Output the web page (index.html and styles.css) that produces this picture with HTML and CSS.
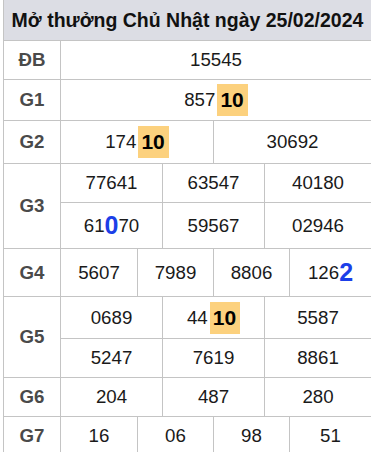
FILE: index.html
```html
<!DOCTYPE html>
<html lang="vi">
<head>
    <meta charset="UTF-8">
    <meta name="viewport" content="width=device-width, initial-scale=1.0">
    <title>Kết quả xổ số</title>
    <link rel="stylesheet" href="styles.css">
</head>
<body>
    <div class="kq">
        <div class="kq-title">Mở thưởng Chủ Nhật ngày 25/02/2024</div>

        <div class="kq-row row-db">
            <div class="kq-label">ĐB</div>
            <div class="kq-vals">
                <div class="cell">15545</div>
            </div>
        </div>

        <div class="kq-row row-g1">
            <div class="kq-label">G1</div>
            <div class="kq-vals">
                <div class="cell">857<span class="hl">10</span></div>
            </div>
        </div>

        <div class="kq-row row-g2">
            <div class="kq-label">G2</div>
            <div class="kq-vals c2">
                <div class="cell">174<span class="hl">10</span></div>
                <div class="cell">30692</div>
            </div>
        </div>

        <div class="kq-row row-g3">
            <div class="kq-label">G3</div>
            <div class="kq-vals c3">
                <div class="cell">77641</div>
                <div class="cell">63547</div>
                <div class="cell">40180</div>
                <div class="cell">61<span class="big">0</span>70</div>
                <div class="cell">59567</div>
                <div class="cell">02946</div>
            </div>
        </div>

        <div class="kq-row row-g4">
            <div class="kq-label">G4</div>
            <div class="kq-vals c4">
                <div class="cell">5607</div>
                <div class="cell">7989</div>
                <div class="cell">8806</div>
                <div class="cell">126<span class="big">2</span></div>
            </div>
        </div>

        <div class="kq-row row-g5">
            <div class="kq-label">G5</div>
            <div class="kq-vals c3">
                <div class="cell">0689</div>
                <div class="cell">44<span class="hl">10</span></div>
                <div class="cell">5587</div>
                <div class="cell">5247</div>
                <div class="cell">7619</div>
                <div class="cell">8861</div>
            </div>
        </div>

        <div class="kq-row">
            <div class="kq-label">G6</div>
            <div class="kq-vals c3">
                <div class="cell">204</div>
                <div class="cell">487</div>
                <div class="cell">280</div>
            </div>
        </div>

        <div class="kq-row">
            <div class="kq-label">G7</div>
            <div class="kq-vals c4">
                <div class="cell">16</div>
                <div class="cell">06</div>
                <div class="cell">98</div>
                <div class="cell">51</div>
            </div>
        </div>
    </div>
</body>
</html>
```

FILE: styles.css
```css
/* Reset styles */
* {
    margin: 0;
    padding: 0;
    box-sizing: border-box;
}

:root {
    --line-color: #c4c4c4;
    --head-color: #dcdde4;
    --text-color: #1a1a1a;
    --label-color: #4a4a4a;
    --hl-color: #fcd17e;
    --blue-color: #1c3fe8;
}

html {
    overflow: hidden;
}

body {
    background: #fff;
    font-family: "Liberation Sans", Arial, sans-serif;
    color: var(--text-color);
}

/* table built from grids, the 1px gaps are the borders */
.kq {
    width: 368px;
    margin-left: 3px;
    padding-left: 1px;
    display: grid;
    gap: 1px;
    background: var(--line-color);
}

.kq-title {
    height: 40px;
    background: var(--head-color);
    color: #111;
    font-size: 19.5px;
    font-weight: bold;
    display: flex;
    align-items: center;
    justify-content: center;
}

.kq-row {
    display: grid;
    grid-template-columns: 56px 1fr;
    gap: 1px;
    grid-auto-rows: 38px;
}

.kq-label {
    background: #fff;
    color: var(--label-color);
    font-size: 18.7px;
    font-weight: bold;
    display: flex;
    align-items: center;
    justify-content: center;
}

.kq-vals {
    display: grid;
    gap: 1px;
    grid-auto-rows: 38px;
}

.kq-vals.c2 {
    grid-template-columns: 152px 1fr;
}

.kq-vals.c3 {
    grid-template-columns: 101px 101px 1fr;
}

.kq-vals.c4 {
    grid-template-columns: 76px 75px 75px 1fr;
}

.cell {
    background: #fff;
    font-size: 18.7px;
    display: flex;
    align-items: center;
    justify-content: center;
}

/* row heights */
.row-g1,
.row-g1 .kq-vals {
    grid-auto-rows: 40px;
}

.row-g2,
.row-g2 .kq-vals {
    grid-auto-rows: 42px;
}

.row-g3 .kq-vals {
    grid-template-rows: 38px 45px;
}

.row-g4,
.row-g4 .kq-vals {
    grid-auto-rows: 47px;
}

.row-g5 .kq-vals {
    grid-template-rows: 41px 38px;
}

.row-g3,
.row-g5 {
    grid-auto-rows: auto;
}

.hl {
    display: inline-block;
    margin-left: 2px;
    padding: 0 4px 0 3px;
    line-height: 32px;
    background: var(--hl-color);
    color: #000;
    font-size: 21px;
    font-weight: bold;
}

.big {
    color: var(--blue-color);
    font-size: 25px;
    font-weight: bold;
}
```
